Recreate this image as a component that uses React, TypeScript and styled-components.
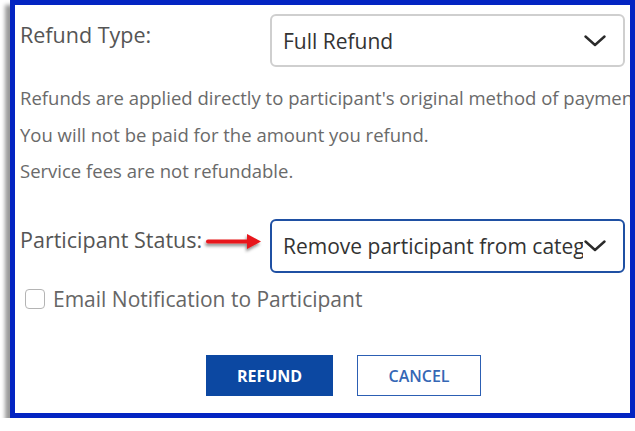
import { createGlobalStyle, styled } from "styled-components";

const GlobalStyle = createGlobalStyle`
  html, body {
    margin: 0;
    padding: 0;
    background: #ffffff;
  }
  body {
    font-family: "Open Sans", "Noto Sans", "Liberation Sans", sans-serif;
  }
  * {
    box-sizing: border-box;
  }
`;

const Chevron = () => (
  <svg width="22" height="12" viewBox="0 0 22 12" fill="none">
    <polyline
      points="1.5,1.5 11,10 20.5,1.5"
      stroke="#2b2b2b"
      strokeWidth="2.4"
      strokeLinecap="round"
      strokeLinejoin="round"
    />
  </svg>
);

const RedArrow = () => (
  <svg width="64" height="24" viewBox="0 0 64 24">
    <defs>
      <filter id="arrowShadow" x="-20%" y="-40%" width="140%" height="200%">
        <feDropShadow dx="-1" dy="2.5" stdDeviation="1.6" floodColor="#000" floodOpacity="0.45" />
      </filter>
    </defs>
    <g filter="url(#arrowShadow)">
      <rect x="3" y="9.5" width="44" height="4" rx="2" fill="#e8141b" />
      <polygon points="44,4 58,11.5 44,19" fill="#e8141b" />
    </g>
  </svg>
);

export default function App() {
  return (
    <>
      <GlobalStyle />
      <_Frame>
        <_FieldRow>
          <_FieldLabel>Refund Type:</_FieldLabel>
          <_Select $active={false}>
            <_SelectText>Full Refund</_SelectText>
            <_ChevronBox>
              <Chevron />
            </_ChevronBox>
          </_Select>
        </_FieldRow>

        <_Notes>
          <_Note>Refunds are applied directly to participant's original method of payment.</_Note>
          <_Note>You will not be paid for the amount you refund.</_Note>
          <_Note>Service fees are not refundable.</_Note>
        </_Notes>

        <_FieldRow $gap={37}>
          <_FieldLabel>Participant Status:</_FieldLabel>
          <_ArrowMark>
            <RedArrow />
          </_ArrowMark>
          <_Select $active>
            <_SelectText>Remove participant from category</_SelectText>
            <_ChevronBox>
              <Chevron />
            </_ChevronBox>
          </_Select>
        </_FieldRow>

        <_CheckRow>
          <_CheckBox type="checkbox" />
          <_CheckLabel>Email Notification to Participant</_CheckLabel>
        </_CheckRow>

        <_ButtonRow>
          <_PrimaryButton>REFUND</_PrimaryButton>
          <_OutlineButton>CANCEL</_OutlineButton>
        </_ButtonRow>
      </_Frame>
    </>
  );
}

const _Frame = styled.div`
  margin-left: 10px;
  width: 625px;
  height: 418px;
  border: 5px solid #0324c2;
  box-shadow: -5px 5px 4px rgba(0, 0, 0, 0.4);
  background: #ffffff;
  padding: 9px 0 0 5px;
  overflow: hidden;
`;

const _FieldRow = styled.div<{ $gap?: number }>`
  position: relative;
  display: flex;
  align-items: flex-start;
  margin-top: ${({ $gap }) => $gap ?? 0}px;
`;

const _FieldLabel = styled.div`
  width: 250px;
  flex-shrink: 0;
  margin-top: 8px;
  font-size: 21.5px;
  line-height: 26px;
  color: #555555;
`;

const _ArrowMark = styled.div`
  position: absolute;
  left: 183px;
  top: 11px;
  line-height: 0;
`;

const _Select = styled.div<{ $active: boolean }>`
  position: relative;
  width: 355px;
  height: ${({ $active }) => ($active ? 54 : 53)}px;
  display: flex;
  align-items: center;
  padding: 0 40px 0 11px;
  border: 2px solid ${({ $active }) => ($active ? "#1f50a3" : "#cfcfcf")};
  border-radius: 6px;
  background: #ffffff;
  overflow: hidden;
`;

const _SelectText = styled.span`
  font-size: 21px;
  color: #333333;
  white-space: nowrap;
  overflow: hidden;
`;

const _ChevronBox = styled.span`
  position: absolute;
  right: 17px;
  top: 50%;
  transform: translateY(-50%);
  line-height: 0;
`;

const _Notes = styled.div`
  margin-top: 20px;
  display: flex;
  flex-direction: column;
  gap: 14.5px;
`;

const _Note = styled.p`
  margin: 0;
  font-size: 18.5px;
  line-height: 22px;
  color: #6a6a6a;
  white-space: nowrap;
`;

const _CheckRow = styled.label`
  margin-top: 13px;
  padding-left: 5px;
  display: flex;
  align-items: center;
  gap: 8px;
`;

const _CheckBox = styled.input`
  appearance: none;
  margin: 0;
  width: 20px;
  height: 20px;
  border: 1.5px solid #b4b4b4;
  border-radius: 4px;
  background: #ffffff;
`;

const _CheckLabel = styled.span`
  font-size: 21px;
  line-height: 26px;
  color: #666666;
`;

const _ButtonRow = styled.div`
  margin-top: 43px;
  padding-left: 186px;
  display: flex;
  gap: 24px;
`;

const _PrimaryButton = styled.button`
  width: 127px;
  height: 41px;
  border: none;
  background: #0c48a2;
  color: #ffffff;
  font-family: inherit;
  font-size: 16px;
  font-weight: 700;
`;

const _OutlineButton = styled.button`
  width: 124px;
  height: 41px;
  border: 1.5px solid #2c5fb3;
  background: #ffffff;
  color: #3567b5;
  font-family: inherit;
  font-size: 16px;
  font-weight: 600;
`;
